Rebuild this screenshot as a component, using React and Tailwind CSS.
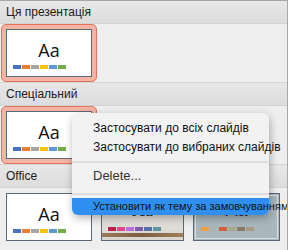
import React from "react";

const officeColors = ["#4472c4", "#ed7d31", "#a5a5a5", "#ffc000", "#5b9bd5", "#70ad47"];
const theme2Colors = ["#c0204a", "#e2478a", "#b56de0", "#7a5cab", "#566ea6", "#5f95a0"];
const theme3Colors = ["#f0a03c", "#a6b7bc", "#d2603a", "#a3a98a", "#877a5f", "#a89a89"];

function Bars({ colors, className = "mt-[6px]" }) {
  return (
    <div className={className + " ml-[6px] flex gap-[1px]"}>
      {colors.map((c, i) => (
        <div key={i} className="w-[8px] h-[4px]" style={{ backgroundColor: c }} />
      ))}
    </div>
  );
}

function WhiteThumb() {
  return (
    <div className="w-[86px] h-[48px] border border-[#5d6877] bg-white flex flex-col pt-[11px]">
      <div className="h-[18px] leading-[18px] text-center text-[18px] font-normal text-[#111] font-['Open_Sans',sans-serif]">
        Aa
      </div>
      <Bars colors={officeColors} />
    </div>
  );
}

function Selected() {
  return (
    <div className="w-[96px] h-[58px] rounded-[5px] border border-[#e5735c] bg-[#f3b3a5] p-[4px]">
      <WhiteThumb />
    </div>
  );
}

function Header({ children, first }) {
  return (
    <div
      className={
        "h-[24px] flex items-center pl-[6px] text-[12px] text-[#1c1c1c] bg-linear-to-b from-[#e7e7e7] to-[#dcdcdc] border-b border-[#d2d2d2] border-t " +
        (first ? "border-t-[#a8a8a8]" : "border-t-[#d6d6d6]")
      }
    >
      {children}
    </div>
  );
}

export default function App() {
  return (
    <div className="w-[288px] h-[250px] relative overflow-hidden bg-[#eeeeee] border-r border-[#a8a8a8] font-['Liberation_Sans',sans-serif]">
      <Header first>Ця презентація</Header>
      <div className="h-[58px] pl-[1px]">
        <Selected />
      </div>
      <Header>Спеціальний</Header>
      <div className="h-[58px] pl-[1px]">
        <Selected />
      </div>
      <Header>Office</Header>
      <div className="flex gap-[9px] pl-[6px] pt-[5px]">
        <WhiteThumb />
        <div className="w-[83px] h-[48px] border border-[#5d6877] bg-linear-to-b from-[#ecebe8] to-[#d9d6d0] flex flex-col pt-[7px]">
          <div className="h-[18px] leading-[18px] text-center text-[18px] text-[#2a2a2a] font-['Liberation_Serif',serif]">
            Aa
          </div>
          <Bars colors={theme2Colors} className="mt-[8px]" />
          <div className="mt-[2px] h-[4px] bg-linear-to-r from-[#9a7a58] via-[#7e5e40] to-[#a0805c]" />
        </div>
        <div className="w-[87px] h-[48px] border border-[#5d6877] bg-[#a9b7bc] p-[1px]">
          <div className="w-full h-full border border-[#d8e0e2] flex flex-col pt-[5px]">
            <div className="h-[18px] leading-[18px] text-center text-[18px] text-[#2a2a2a] font-['Liberation_Sans',sans-serif]">
              Aa
            </div>
            <div className="-ml-[1px]">
              <Bars colors={theme3Colors} className="mt-[8px]" />
            </div>
          </div>
        </div>
      </div>

      <div className="absolute z-10 left-[72px] top-[113px] w-[197px] h-[102px] rounded-[6px] bg-[#f2f2f2] shadow-[1px_3px_8px_rgba(0,0,0,0.3)] pt-[6px] flex flex-col">
        <div className="h-[19px] leading-[19px] pl-[21px] text-[12px] text-[#111] whitespace-nowrap">
          Застосувати до всіх слайдів
        </div>
        <div className="h-[19px] leading-[19px] pl-[21px] text-[12px] text-[#111] whitespace-nowrap">
          Застосувати до вибраних слайдів
        </div>
        <div className="h-[10px] pt-[4px]">
          <div className="h-[2px] bg-[#dedede]" />
        </div>
        <div className="h-[18px] leading-[18px] pl-[21px] text-[13px] text-[#333] whitespace-nowrap">
          Delete...
        </div>
        <div className="h-[13px] pt-[8px]">
          <div className="h-[2px] bg-[#dedede]" />
        </div>
        <div className="h-[17px] leading-[17px] pl-[21px] text-[11px] text-[#111] whitespace-nowrap bg-[#2f8ff0] rounded-b-[6px]">
          Установити як тему за замовчуванням
        </div>
      </div>
    </div>
  );
}
